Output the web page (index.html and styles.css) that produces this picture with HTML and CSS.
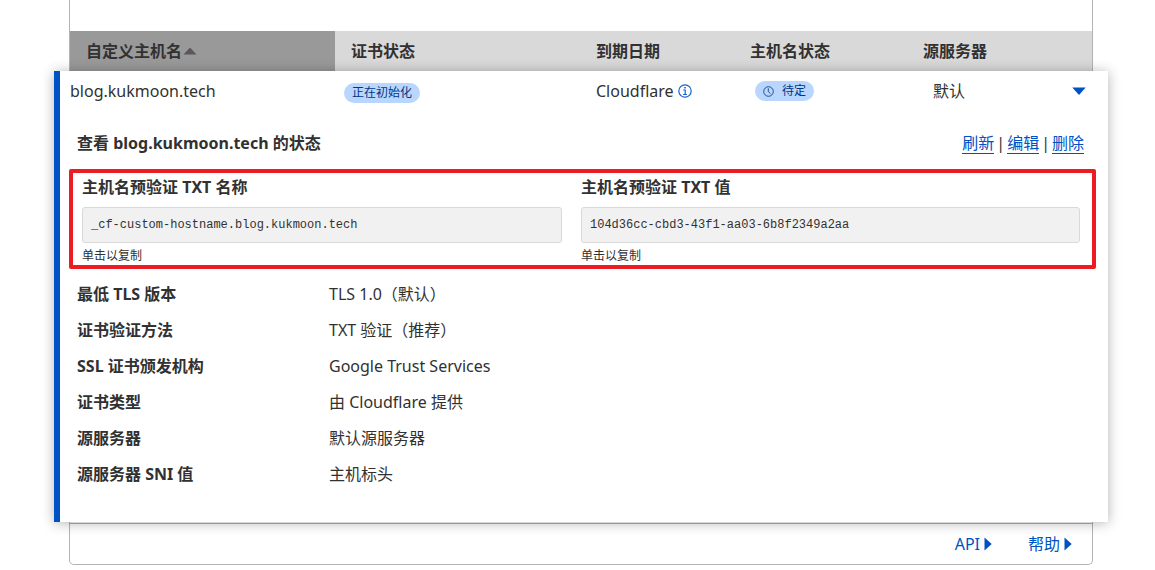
FILE: index.html
```html
<!DOCTYPE html>
<html lang="zh-CN">
<head>
<meta charset="utf-8">
<title>自定义主机名</title>
<link rel="stylesheet" href="styles.css">
</head>
<body>
<main class="card">
  <table class="hosts">
    <thead>
      <tr class="head-row">
        <th class="sorted"><button class="sort" type="button">自定义主机名<svg width="14" height="8" viewBox="0 0 14 8"><path d="M0.500 7.500 7 0.500 13.500 7.500z" fill="#595959"/></svg></button></th>
        <th>证书状态</th>
        <th>到期日期</th>
        <th>主机名状态</th>
        <th>源服务器</th>
      </tr>
    </thead>
    <tbody class="panel">
      <tr class="host-row">
        <td>blog.kukmoon.tech</td>
        <td class="cert"><span class="badge">正在初始化</span></td>
        <td class="issuer">Cloudflare
          <svg width="14" height="14" viewBox="0 0 14 14" fill="none" stroke="#1a62cc"><circle cx="7" cy="7" r="6.200" stroke-width="1.200"/><path d="M5.200 6H7.200V10.200M5 10.500H9" stroke-width="1.200"/><path d="M6.200 3.700H7.800" stroke-width="1.500"/></svg>
        </td>
        <td><span class="badge badge-icon"><svg width="11" height="11" viewBox="0 0 11 11" fill="none" stroke="#234d8c"><circle cx="5.500" cy="5.500" r="4.800"/><path d="M5.300 2.300V5.600L7.500 7.700"/></svg>待定</span></td>
        <td class="origin">默认
          <button class="toggle" type="button" aria-label="收起"><svg width="14" height="8" viewBox="0 0 14 8"><path d="M0.300 0.500H13.700L7 8z" fill="#0051c3"/></svg></button>
        </td>
      </tr>
      <tr class="detail-row">
        <td class="detail" colspan="5">
          <div class="detail-head">
            <h2 class="title">查看 blog.kukmoon.tech 的状态</h2>
            <nav class="actions"><a href="#refresh">刷新</a>|<a href="#edit">编辑</a>|<a href="#delete">删除</a></nav>
          </div>
          <div class="verify">
            <div class="field">
              <label for="txt-name">主机名预验证 TXT 名称</label>
              <input id="txt-name" type="text" readonly value="_cf-custom-hostname.blog.kukmoon.tech">
              <span class="hint">单击以复制</span>
            </div>
            <div class="field">
              <label for="txt-value">主机名预验证 TXT 值</label>
              <input id="txt-value" type="text" readonly value="104d36cc-cbd3-43f1-aa03-6b8f2349a2aa">
              <span class="hint">单击以复制</span>
            </div>
          </div>
          <dl class="facts">
            <dt>最低 TLS 版本</dt><dd>TLS 1.0（默认）</dd>
            <dt>证书验证方法</dt><dd>TXT 验证（推荐）</dd>
            <dt>SSL 证书颁发机构</dt><dd>Google Trust Services</dd>
            <dt>证书类型</dt><dd>由 Cloudflare 提供</dd>
            <dt>源服务器</dt><dd>默认源服务器</dd>
            <dt>源服务器 SNI 值</dt><dd>主机标头</dd>
          </dl>
        </td>
      </tr>
    </tbody>
  </table>
  <footer class="card-foot">
    <a href="#api">API<svg width="8" height="14" viewBox="0 0 8 14"><path d="M0.500 0.500 7.700 7 0.500 13.500z" fill="#0051c3"/></svg></a>
    <a href="#help">帮助<svg width="8" height="14" viewBox="0 0 8 14"><path d="M0.500 0.500 7.700 7 0.500 13.500z" fill="#0051c3"/></svg></a>
  </footer>
</main>
</body>
</html>
```
FILE: styles.css
```css
* { box-sizing: border-box; }

body {
  margin: 0;
  padding: 0 62px 0 69px;
  background: #fff;
  color: #313131;
  font: 16px/24px "Noto Sans", "Noto Sans CJK SC", sans-serif;
}

button {
  padding: 0;
  border: 0;
  background: none;
  color: inherit;
  font: inherit;
  cursor: pointer;
}

svg { flex: none; }

.card {
  padding-top: 31px;
  border: 1px solid #b3b3b3;
  border-top: 0;
  border-radius: 0 0 5px 5px;
}

.hosts,
.hosts thead,
.detail-row,
.detail { display: block; }

.head-row {
  display: grid;
  grid-template-columns: 265fr 245fr 154fr 173fr 185fr;
  background: #d9d9d9;
}

.head-row th {
  padding: 8px 16px;
  font-weight: 700;
  text-align: left;
}

.head-row .sorted { background: #999; }

.sort {
  display: flex;
  align-items: center;
  gap: 1px;
}

.panel {
  display: block;
  position: relative;
  margin: 0 -16px;
  border-left: 6px solid #0051c3;
  background: #fff;
  box-shadow: 0 1px 12px rgba(0, 0, 0, 0.3);
}

.host-row {
  display: grid;
  grid-template-columns: 274fr 252fr 159fr 178fr 153fr;
  padding: 8px 22px 8px 10px;
}

.host-row td {
  display: flex;
  align-items: center;
  padding: 0;
}

.host-row .cert { padding-top: 4px; }

.host-row .issuer { gap: 4px; }

.host-row .origin { justify-content: space-between; }

.toggle { display: flex; }

.badge {
  display: flex;
  align-items: center;
  padding: 0 8px;
  border-radius: 10px;
  background: #b9d6ff;
  color: #003681;
  font-size: 12px;
  line-height: 20px;
}

.badge-icon { gap: 8px; }

.detail { padding: 20px 12px 36px 9px; }

.detail-head {
  display: flex;
  justify-content: space-between;
  padding: 0 12px 0 8px;
}

.title {
  margin: 0;
  font-size: 16px;
  font-weight: 700;
}

.actions {
  display: flex;
  gap: 2px;
}

.actions a {
  height: 23px;
  border-bottom: 1px solid #0051c3;
  color: #0051c3;
  text-decoration: none;
}

.verify {
  display: grid;
  grid-template-columns: 480fr 499fr;
  gap: 19px;
  margin-top: 14px;
  padding: 2px 12px 0 9px;
  border: 4px solid #ed1c24;
  border-radius: 2px;
}

.field {
  display: flex;
  flex-direction: column;
}

.field label { font-weight: 700; }

.field input {
  height: 36px;
  margin: 8px 0 4px;
  padding: 0 8px;
  border: 1px solid #d9d9d9;
  border-radius: 3px;
  background: #f1f1f1;
  color: #313131;
  font: 12px "Liberation Mono", monospace;
}

.hint {
  font-size: 12px;
  line-height: 18px;
}

.facts {
  display: grid;
  grid-template-columns: 252px 1fr;
  row-gap: 12px;
  margin: 13px 0 0;
  padding-left: 8px;
}

.facts dt { font-weight: 700; }

.facts dd { margin: 0; }

.card-foot {
  display: flex;
  justify-content: flex-end;
  gap: 36px;
  margin-top: 1px;
  padding: 8px 20px;
  border-top: 1px solid #b3b3b3;
}

.card-foot a {
  display: flex;
  align-items: center;
  gap: 4px;
  color: #0051c3;
  text-decoration: none;
}
```
